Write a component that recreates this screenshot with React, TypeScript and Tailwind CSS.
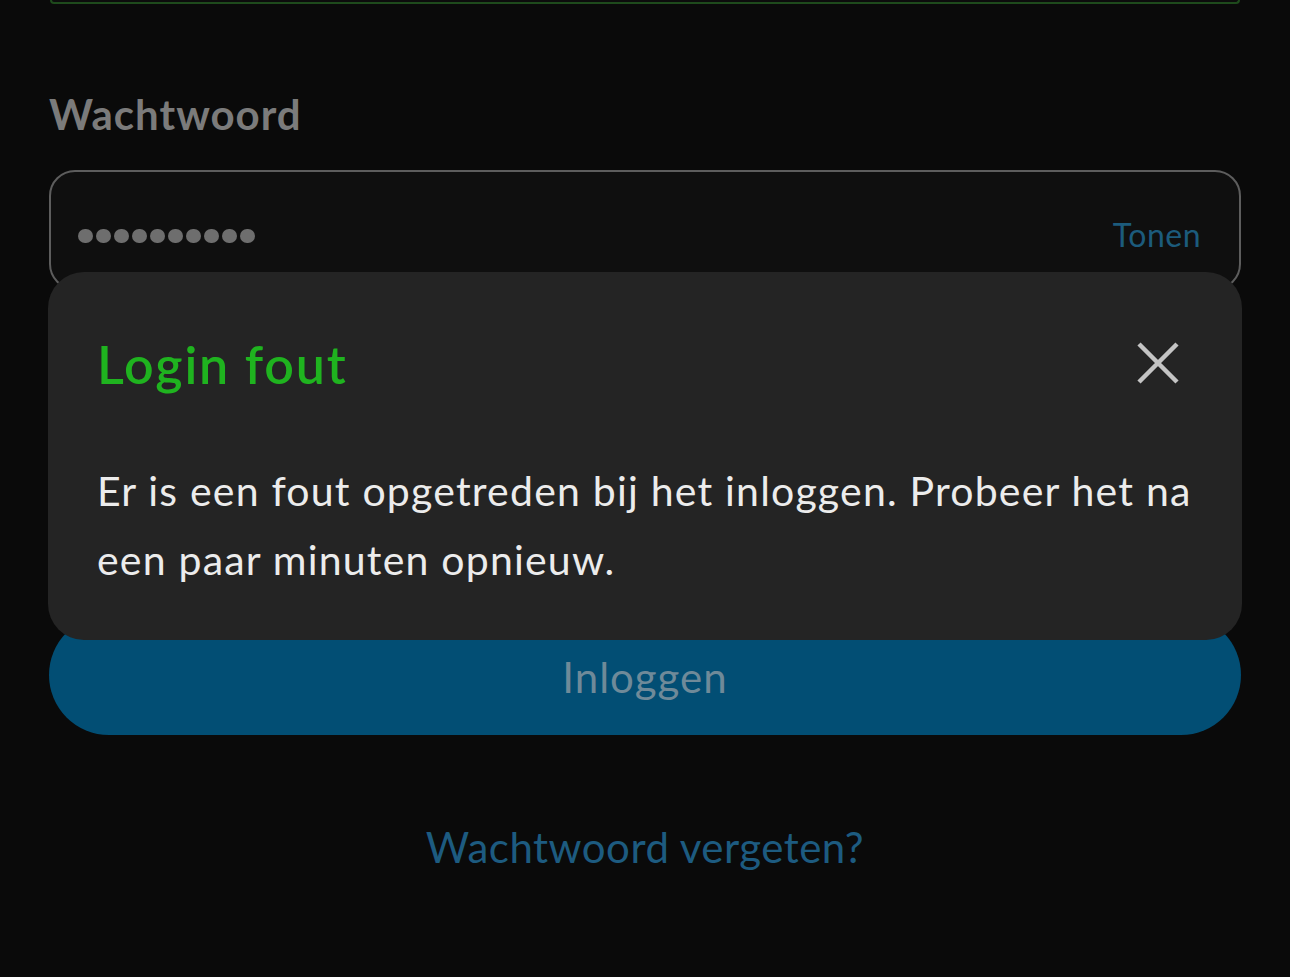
import React from "react";

export default function App() {
  return (
    <div
      className="relative w-[1290px] h-[977px] overflow-hidden bg-[#0a0a0a]"
      style={{ fontFamily: "Lato, 'Open Sans', sans-serif" }}
    >
      <div className="mx-[50px] h-[4px] rounded-b-[14px] border-2 border-t-0 border-[#1e4a1c] bg-[#0c0c0c]" />
      <div className="px-[49px]">
        <div className="mt-[86px] text-[42px] font-bold leading-[48px] text-[#7b7b7b] tracking-[1px]">
          Wachtwoord
        </div>
        <div className="mt-[32px] flex h-[120px] items-center justify-between rounded-[26px] border-2 border-[#5d5d5d] bg-[#0f0f0f] pl-[27px] pr-[38px] pt-[10px]">
          <div className="flex gap-[3.5px] pt-[2px]">
            {Array.from({ length: 10 }).map((_, i) => (
              <span key={i} className="block h-[14.5px] w-[14.5px] rounded-full bg-[#6e6e6e]" />
            ))}
          </div>
          <span className="text-[32px] text-[#1c5b7c] tracking-[0.5px]">Tonen</span>
        </div>
        <div className="mt-[325px] flex h-[120px] items-center justify-center rounded-full bg-[#024e74] pt-[4px]">
          <span className="text-[42px] text-[#6f8a99] tracking-[1px]">Inloggen</span>
        </div>
        <div className="mt-[86px] text-center text-[42px] leading-[52px] text-[#1d5b80] tracking-[0.5px]">
          Wachtwoord vergeten?
        </div>
      </div>

      <div className="absolute left-[48px] top-[272px] w-[1194px] h-[368px] rounded-[36px] bg-[#242424] pl-[49px] pr-[36px] pt-[60px]">
        <div className="flex items-start justify-between">
          <span className="text-[52px] font-semibold leading-[64px] text-[#1fb31f] tracking-[1.8px]">
            Login fout
          </span>
          <svg width="46" height="46" viewBox="0 0 46 46" className="mt-[8px] mr-[25px]">
            <path d="M4 4 L42 42 M42 4 L4 42" stroke="#c4c4c4" strokeWidth="4.5" strokeLinecap="butt" />
          </svg>
        </div>
        <p className="mt-[60px] text-[41px] leading-[69px] text-[#ececec] tracking-[1.2px]">
          Er is een fout opgetreden bij het inloggen. Probeer het na een paar minuten opnieuw.
        </p>
      </div>
    </div>
  );
}
